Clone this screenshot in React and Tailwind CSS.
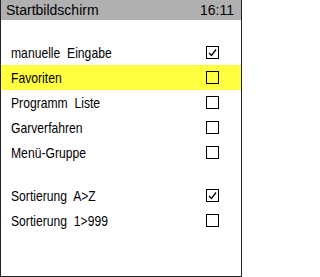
import React from "react";

const font = { fontFamily: '"Liberation Sans", Arial, sans-serif' };

function Box({ checked }) {
  return (
    <div className="w-[13px] h-[13px] border border-black bg-transparent flex items-center justify-center">
      {checked && (
        <svg width="11" height="11" viewBox="0 0 11 11">
          <polyline points="2,6 4.5,8.5 9,2.5" fill="none" stroke="#000" strokeWidth="1.3" />
        </svg>
      )}
    </div>
  );
}

function Row({ label, checked, highlight }) {
  return (
    <div className={`h-[25px] flex items-center justify-between pl-[10px] pr-[22px] ${highlight ? "bg-[#ffff3f]" : ""}`}>
      <span className="inline-block origin-left scale-x-[0.81] text-[15px] leading-none text-black whitespace-pre">{label}</span>
      <Box checked={checked} />
    </div>
  );
}

export default function App() {
  return (
    <div className="w-[242px] h-[277px] bg-white border-x border-b border-[#222] flex flex-col overflow-hidden" style={font}>
      <div className="h-[20px] bg-[#b0b0b0] flex items-center justify-between pl-[5px] pr-[7px] text-[14px] leading-none text-black">
        <span>Startbildschirm</span>
        <span>16:11</span>
      </div>
      <div className="h-[20px]" />
      <Row label="manuelle  Eingabe" checked />
      <Row label="Favoriten" highlight />
      <Row label="Programm  Liste" />
      <Row label="Garverfahren" />
      <Row label="Menü-Gruppe" />
      <div className="h-[18px]" />
      <Row label="Sortierung  A>Z" checked />
      <Row label="Sortierung  1>999" />
    </div>
  );
}
